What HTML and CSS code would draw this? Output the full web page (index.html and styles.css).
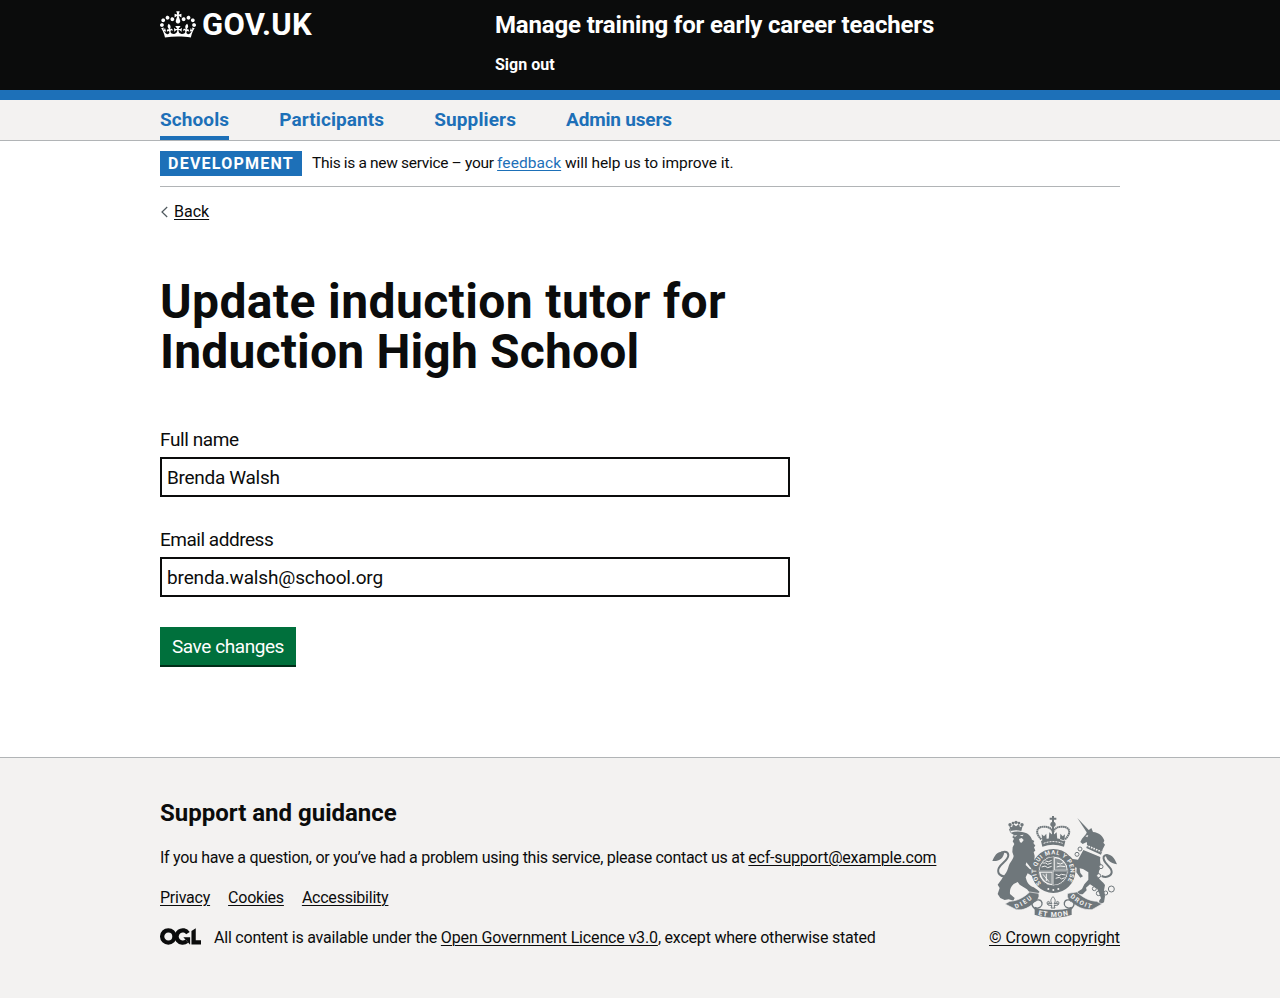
FILE: index.html
```html
<!DOCTYPE html>
<html lang="en">
<head>
<meta charset="utf-8">
<title>Update induction tutor</title>
<link rel="stylesheet" href="styles.css">
</head>
<body>
<header class="header">
  <div class="container header-inner">
    <a class="logo" href="#">
      <svg class="crown" viewBox="0 0 132 97" width="36" height="27" aria-hidden="true"><path fill="currentColor" fill-rule="evenodd" d="M25 30.2c3.5 1.5 7.7-.2 9.1-3.7 1.5-3.6-.2-7.8-3.9-9.2-3.6-1.4-7.6.3-9.1 3.9-1.4 3.5.3 7.5 3.9 9zM9 39.5c3.6 1.5 7.8-.2 9.2-3.7 1.5-3.6-.2-7.8-3.9-9.1-3.6-1.5-7.6.2-9.1 3.8-1.4 3.5.3 7.5 3.8 9zM4.4 57.2c3.5 1.5 7.7-.2 9.1-3.8 1.5-3.6-.2-7.7-3.9-9.1-3.5-1.5-7.6.3-9.1 3.8-1.4 3.5.3 7.6 3.9 9.1zm38.3-21.4c3.5 1.5 7.7-.2 9.1-3.8 1.5-3.6-.2-7.7-3.9-9.1-3.6-1.5-7.6.3-9.1 3.8-1.3 3.6.4 7.7 3.9 9.1zm64.4-5.6c-3.6 1.5-7.8-.2-9.1-3.7-1.5-3.6.2-7.8 3.8-9.2 3.6-1.4 7.7.3 9.2 3.9 1.3 3.5-.4 7.5-3.9 9zm15.9 9.3c-3.6 1.5-7.7-.2-9.1-3.7-1.5-3.6.2-7.8 3.7-9.1 3.6-1.5 7.7.2 9.2 3.8 1.5 3.5-.3 7.5-3.8 9zm4.7 17.7c-3.6 1.5-7.8-.2-9.2-3.8-1.5-3.6.2-7.7 3.9-9.1 3.6-1.5 7.7.3 9.2 3.8 1.3 3.5-.4 7.6-3.9 9.1zM89.3 35.8c-3.6 1.5-7.8-.2-9.2-3.8-1.4-3.6.2-7.7 3.9-9.1 3.6-1.5 7.7.3 9.2 3.8 1.4 3.6-.3 7.7-3.9 9.1zM69.7 17.7l8.9 4.7V9.3l-8.9 2.8c-.2-.3-.5-.6-.9-.9L72.4 0H59.6l3.5 11.2c-.3.3-.6.5-.9.9l-8.8-2.8v13.1l8.8-4.7c.3.3.6.7.9.9l-5 15.4v.1c-.2.8-.4 1.6-.4 2.4 0 4.1 3.1 7.5 7 8.1h.2c.3 0 .7.1 1 .1.4 0 .7 0 1-.1h.2c4-.6 7.1-4.1 7.1-8.1 0-.8-.1-1.7-.4-2.4V34l-5.1-15.4c.4-.2.7-.6 1-.9zM66 92.8c16.9 0 32.8 1.1 47.1 3.2 4-16.9 8.9-26.7 14-33.5l-9.6-3.4c1 4.9 1.1 7.2 0 10.2-1.5-1.4-3-4.3-4.2-8.7L108.6 76c2.8-2 5-3.2 7.5-3.3-4.4 9.4-10 11.9-13.6 11.2-4.3-.8-6.3-4.6-5.6-7.9 1-4.7 5.7-5.9 8-.5 4.3-8.7-3-11.4-7.6-8.8 7.1-7.2 7.9-13.5 2.1-21.1-8 6.1-8.1 12.3-4.5 20.8-4.7-5.4-12.1-2.5-9.5 6.2 3.4-5.2 7.9-2 7.2 3.1-.6 4.3-6.4 7.8-13.5 7.2-10.3-.9-10.9-8-11.2-13.8 2.5-.5 7.1 1.8 11 7.3L80.2 60c-4.1 4.4-8 5.3-12.3 5.4 1.4-4.4 8-11.6 8-11.6H55.5s6.4 7.2 7.9 11.6c-4.2-.1-8-1-12.3-5.4l1.4 16.4c3.9-5.5 8.5-7.7 10.9-7.3-.3 5.8-.9 12.8-11.1 13.8-7.2.6-12.9-2.9-13.5-7.2-.7-5 3.8-8.3 7.1-3.1 2.7-8.7-4.6-11.6-9.4-6.2 3.7-8.5 3.6-14.7-4.6-20.8-5.8 7.6-5 13.9 2.2 21.1-4.7-2.6-11.9.1-7.7 8.8 2.3-5.5 7.1-4.2 8.1.5.7 3.3-1.3 7.1-5.7 7.9-3.5.7-9-1.8-13.5-11.2 2.5.1 4.7 1.3 7.5 3.3l-4.7-15.4c-1.2 4.4-2.7 7.2-4.3 8.7-1.1-3-.9-5.3 0-10.2l-9.5 3.4c5 6.9 9.9 16.7 14 33.5 14.8-2.1 30.8-3.2 47.7-3.2z"/></svg>
      <span class="logo-text">GOV.UK</span>
    </a>
    <div class="header-content">
      <a class="service-name" href="#">Manage training for early career teachers</a>
      <a class="sign-out" href="#">Sign out</a>
    </div>
  </div>
</header>
<nav class="nav">
  <div class="container nav-list">
    <a class="nav-link nav-schools current" href="#">Schools</a>
    <a class="nav-link nav-participants" href="#">Participants</a>
    <a class="nav-link nav-suppliers" href="#">Suppliers</a>
    <a class="nav-link nav-admin" href="#">Admin users</a>
  </div>
</nav>
<div class="container page">
  <div class="phase">
    <strong class="tag">DEVELOPMENT</strong>
    <span class="phase-text"><span class="phase-lead">This is a new service – your </span><a class="link" href="#">feedback</a> will help us to improve it.</span>
  </div>
  <a class="back" href="#"><svg class="chevron" viewBox="0 0 8 12" width="8" height="12" aria-hidden="true"><path d="M7.200 1 2 6l5.200 5" fill="none" stroke="#505a5f" stroke-width="1.200"/></svg><span class="back-text">Back</span></a>
  <main>
    <h1 class="title"><span class="title-one">Update induction tutor for</span><br><span class="title-two">Induction High School</span></h1>
    <form class="form">
      <div class="group">
        <label class="label label-name" for="name">Full name</label>
        <input class="input input-name" id="name" type="text" value="Brenda Walsh">
      </div>
      <div class="group">
        <label class="label label-email" for="email">Email address</label>
        <input class="input input-email" id="email" type="text" value="brenda.walsh@school.org">
      </div>
      <button class="button" type="button">Save changes</button>
    </form>
  </main>
</div>
<footer class="footer">
  <div class="container footer-inner">
    <div class="footer-main">
      <h2 class="footer-title">Support and guidance</h2>
      <p class="support">If you have a question, or you’ve had a problem using this service, please contact us at <a class="support-link" href="#">ecf-support@example.com</a></p>
      <div class="footer-links"><a href="#">Privacy</a><a href="#">Cookies</a><a href="#">Accessibility</a></div>
      <div class="licence">
        <svg class="ogl" viewBox="0 0 483.2 195.7" width="41" height="17" aria-hidden="true"><g fill="none" stroke="#0b0c0c" stroke-width="50.7"><circle cx="97.8" cy="97.8" r="72.5"/><path d="M329 58.900A72.500 72.500 0 1 0 316 152"/></g><path fill="#0b0c0c" d="M275 105.700h80v87.800h-3zM370.800 32.400 421.500.1v142.700h61.700v50.700H370.800z"/></svg>
        <span class="licence-text">All content is available under the <a class="licence-link" href="#">Open Government Licence v3.0</a>, except where otherwise stated</span>
      </div>
    </div>
    <a class="copyright" href="#">
      <svg class="crest" viewBox="51 33 375 306" width="125" height="102" aria-hidden="true">
        <g fill="#6f777b">
          <!-- lion -->
          <path d="M103 62l4 16c10-3 22-3 32 0l4-16-8 5-3-10-9 7-9-7-3 10z"/>
          <circle cx="123" cy="52" r="5"/><circle cx="105" cy="59" r="5"/><circle cx="141" cy="59" r="5"/><circle cx="114" cy="54" r="4"/><circle cx="132" cy="54" r="4"/>
          <path d="M107 83c12-4 26-5 38-1 15 3 22 11 26 22l7 4-3 6 6 8-4 5 4 10-5 4 3 12-1 12 12 8-2 5 6 6-8-1 4 9-10-5v8l-8-4-4 6 4 16-14-8-6 12c4 18 12 26 24 30l12 8 6 6-8 6-20-2-10-12-22-14-6-8-12 6c-10 10-12 18-11 30l14 12-4 8-14-4-12 2-13-6-8-12 6-18-6-10 12-16c8-14 16-20 20-36 4-16 14-22 16-34l-4-12 1-14 5-10-5-8 4-8-5-4 4-8-10-6-4-10 4-4z"/>
          <!-- unicorn -->
          <path d="M307 39l29 44 8-5z"/>
          <path d="M349 69l5 12c18 2 30 12 34 26l-3 6 5 6-7 14c-2 8-3 12-5 16l-44-20c2-8 3-13 1-18l-12 6-7-6 5-10 12-14 4-8z"/>
          <path d="M325 135l51 21c-2 12 0 20 4 28l-8 14-2 18c4 10 14 14 20 24l-3 16 3 18-3 18-16 8 2-14 5-6-5-14-6-14-22-14-12 10 2 8-12 12-20 0 3-6 15-10 7-14 12-14 0-22-16-10-10-2 2 14 8 10-8 4-12-16 1-14-16-4-14-12-8-14 6-6 12 2 8 8 16 2z"/>
        </g>
        <g fill="none" stroke="#6f777b" stroke-width="6">
          <path d="M94 214c-18 2-30-10-22-26 8-14 28-22 28-38-2-14-20-11-26-2"/>
          <path d="M380 213c18 8 36-4 28-20-10-16-26-24-22-38 5-9 16-3 24 7"/>
        </g>
        <path fill="#6f777b" d="M88 141c-20-4-28 8-36 27 20 2 34-8 36-27zM392 147c16 0 26 10 34 31-20-4-34-14-34-31z"/>
        <g fill="#f3f2f1"><path d="M132 102l8-3 6 6-6 8-5-1z"/><path d="M113 92l14-2-6 5zM134 91l12-2-4 5z"/><path d="M331 93l9-3-3 7z"/><path d="M154 172l18 22-8-2-12-12z"/></g>
        <path d="M333 121l46 19" fill="none" stroke="#f3f2f1" stroke-width="5" stroke-dasharray="5 3"/>
        <path d="M327 132l49 21" fill="none" stroke="#f3f2f1" stroke-width="3"/>
        <g fill="none" stroke="#6f777b" stroke-width="3"><circle cx="358" cy="251" r="6"/><circle cx="371" cy="265" r="7"/><circle cx="392" cy="264" r="6"/><circle cx="409" cy="252" r="9"/></g>
        <g fill="#f3f2f1" stroke="#6f777b" stroke-width="3"><circle cx="315" cy="132" r="6"/><circle cx="306" cy="148" r="6"/><circle cx="378" cy="185" r="6"/><circle cx="371" cy="212" r="6"/></g>
        <!-- royal crown -->
        <g fill="none" stroke="#6f777b" stroke-width="6">
          <path d="M199 103C176 80 188 64 208 65s22 10 26 17c4-7 6-16 26-17s34 15 10 38" stroke-dasharray="5 1"/>
          <path d="M234 60v34M224 41h20M234 33v22"/>
        </g>
        <circle cx="234" cy="58" r="8" fill="#6f777b"/>
        <path fill="#6f777b" d="M198 108c24-12 48-12 73 0l-4 17c-24-8-42-8-65 0zM200 88l7 6 7-8 1 19-13 4zM270 88l-7 6-7-8-1 19 13 4zM223 82l11 9 11-9 2 22h-26z"/>
        <path d="M206 115c18-7 38-7 57 0" stroke="#f3f2f1" stroke-width="3" stroke-dasharray="6 3" fill="none"/>
        <!-- garter and shield -->
        <circle cx="235" cy="198" r="55" fill="none" stroke="#6f777b" stroke-width="22"/>
        <circle cx="235" cy="198" r="45" fill="#f3f2f1" stroke="#6f777b" stroke-width="3"/>
        <path d="M235 157a41 41 0 0 0-41 41h41zM235 198v41a41 41 0 0 0 41-41z" fill="#6f777b"/>
        <path d="M240 160v34h35c-2-20-16-32-35-34zM197 203c3 18 15 31 33 34v-34z" fill="#899093"/>
        <g fill="none" stroke="#f3f2f1" stroke-width="3"><path d="M202 174h10l6 4 12-4M200 186l10-3 8 5 12-4M211 168l10 2 9-4M242 208l10 4 7-4 13 2M242 220l11-3 7 5 9-4M246 174l10 3 10-4M245 186l10-3 16 2M204 208l18 22M214 206v22"/></g>
        <path d="M235 153v90M190 198h90" stroke="#6f777b" stroke-width="5"/>
        <path d="M235 153v90M190 198h90" stroke="#f3f2f1" stroke-width="1.500"/>
        <path id="garter" d="M199 235A51 51 0 1 1 271 235" fill="none"/>
        <text class="crest-text garter-text"><textPath href="#garter" startOffset="0" textLength="230">SOIT QUI MAL Y PENSE</textPath></text>
        <g fill="#f3f2f1"><circle cx="220" cy="252" r="3"/><circle cx="235" cy="255" r="3"/><circle cx="250" cy="252" r="3"/></g>
        <!-- motto ribbon -->
        <path d="M90 297l14-8c24-2 40-10 60-28l26 4c4 4 2 16-4 20-22 24-42 32-62 29zM381 297l-16-8c-24-2-38-10-60-28l-26 4c-4 4-2 16 4 20 22 22 42 30 68 29z" fill="#6f777b" stroke="#f3f2f1" stroke-width="2"/>
        <path d="M186 282c-10 4-18 12-14 20 3 6 8 8 9 12M181 330v-22c12 4 22-4 20-14-2-12-18-12-20-4M282 282c10 4 18 12 14 20-3 6-7 8-8 12M288 330v-22c-12 4-22-4-20-14 2-12 18-12 20-4" fill="none" stroke="#6f777b" stroke-width="4"/>
        <path d="M181 308c32 9 76 9 107 0v22c-30 11-76 11-107 0z" fill="#6f777b"/>
        <path d="M234 275c8 8 8 14 3 22l12-3v6l-12 2 3 7h-12l3-7-12-2v-6l12 3c-5-8-5-14 3-22zM227 296c-6-12-14-6-9 3M241 296c6-12 14-6 9 3" fill="#f3f2f1" stroke="#6f777b" stroke-width="3"/>
        <path id="dieu" d="M122 311Q152 300 178 275" fill="none"/><path id="mon" d="M189 330Q235 342 284 330" fill="none"/><path id="droit" d="M285 276Q316 304 352 312" fill="none"/>
        <text class="crest-text"><textPath href="#dieu" textLength="58">DIEU</textPath></text>
        <text class="crest-text mon-text"><textPath href="#mon" textLength="92">ET MON</textPath></text>
        <text class="crest-text"><textPath href="#droit" textLength="72">DROIT</textPath></text>
      </svg>
      <span class="copyright-text">© Crown copyright</span>
    </a>
  </div>
</footer>
</body>
</html>
```
FILE: styles.css
```css
* { box-sizing: border-box; }
body { margin: 0; background: #fff; color: #0b0c0c; font: 16px/20px Roboto, "Liberation Sans", sans-serif; }
a { color: inherit; text-decoration: underline; text-decoration-thickness: 1px; text-underline-offset: 2px; }
.container { width: 960px; margin: 0 auto; }
.header { height: 100px; background: #0b0c0c; border-bottom: 10px solid #1d70b8; color: #fff; }
.header a { text-decoration: none; }
.header-inner { display: flex; }
.logo { width: 335px; display: flex; align-items: flex-start; gap: 6px; padding-top: 11px; }
.logo-text { font-size: 31px; line-height: 28px; font-weight: 700; letter-spacing: 0.3px; }
.header-content { display: flex; flex-direction: column; }
.service-name { font-size: 24px; line-height: 30px; font-weight: 700; padding-top: 10px; letter-spacing: -0.165px; }
.sign-out { font-weight: 700; padding-top: 15px; }
.nav { height: 41px; background: #f3f2f1; border-bottom: 1px solid #b1b4b6; }
.nav-list { display: flex; gap: 50px; }
.nav-link { height: 40px; font-size: 19px; line-height: 40px; font-weight: 700; color: #1d70b8; text-decoration: none; letter-spacing: 0.1px; }
.nav-suppliers { letter-spacing: 0.12px; }
.nav-admin { letter-spacing: -0.18px; }
.current { border-bottom: 4px solid #1d70b8; }
.phase { display: flex; gap: 10px; padding: 10px 0; border-bottom: 1px solid #b1b4b6; height: 46px; }
.tag { height: 25px; padding: 0 8px; background: #1d70b8; color: #fff; font-size: 16px; line-height: 25px; letter-spacing: 1.245px; }
.phase-text { line-height: 25px; font-size: 15.5px; letter-spacing: -0.06px; }
.phase-lead { letter-spacing: -0.32px; }
.link { color: #1d70b8; letter-spacing: 0.07px; }
.back { display: flex; align-items: center; gap: 6px; margin-top: 15px; text-decoration: none; }
.back-text { text-decoration: underline; }
.title { margin: 55px 0 0; font-size: 48px; line-height: 50px; font-weight: 700; }
.title-one { letter-spacing: 0.38px; }
.title-two { letter-spacing: 0.17px; }
.form { margin-top: 50px; }
.group { height: 100px; width: 630px; }
.label { display: block; font-size: 19px; line-height: 25px; margin-bottom: 5px; }
.label-name { letter-spacing: -0.4px; }
.label-email { letter-spacing: -0.48px; }
.input { display: block; width: 630px; height: 40px; border: 2px solid #0b0c0c; border-radius: 0; padding: 5px; font: 19px/25px Roboto, sans-serif; color: #0b0c0c; }
.input-name { letter-spacing: -0.3px; }
.input-email { letter-spacing: -0.15px; }
.button { display: block; height: 40px; padding: 1px 12px 0; border: 0; border-bottom: 2px solid #002d18; background: #00703c; color: #fff; font: 19px/37px Roboto, sans-serif; letter-spacing: -0.43px; }
.page { height: 616px; }
.footer { height: 241px; background: #f3f2f1; border-top: 1px solid #b1b4b6; }
.footer-inner { display: flex; justify-content: space-between; }
.footer-title { margin: 40px 0 20px; font-size: 24px; line-height: 30px; }
.support { margin: 0 0 20px; white-space: nowrap; letter-spacing: -0.287px; }
.support-link { letter-spacing: -0.2px; }
.footer-links { display: flex; gap: 18px; margin-bottom: 20px; letter-spacing: -0.23px; }
.licence { display: flex; gap: 13px; white-space: nowrap; letter-spacing: -0.21px; }
.licence-link { letter-spacing: -0.146px; }
.copyright { display: flex; flex-direction: column; align-items: center; padding-top: 58px; gap: 10px; white-space: nowrap; text-decoration: none; }
.copyright-text { text-decoration: underline; letter-spacing: -0.09px; }
.crest-text { font: 700 19px Roboto, sans-serif; fill: #f3f2f1; }
.mon-text { font-size: 21px; }
.garter-text { font-size: 18px; }
```
